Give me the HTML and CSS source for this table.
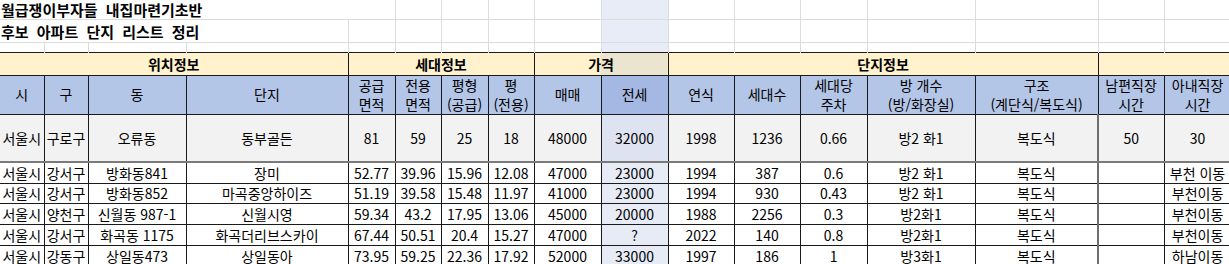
FILE: index.html
```html
<!DOCTYPE html>
<html lang="ko">
<head>
<meta charset="utf-8">
<title>후보 아파트 단지 리스트 정리</title>
<link rel="stylesheet" href="styles.css">
</head>
<body>
<table class="sheet">
  <colgroup>
    <col class="ca"><col class="cb"><col class="cc"><col class="cd">
    <col class="ce"><col class="cf"><col class="cg"><col class="ch">
    <col class="ci"><col class="cj"><col class="ck"><col class="cl">
    <col class="cm"><col class="cn"><col class="co"><col class="cp"><col class="cq">
  </colgroup>
  <tr class="r1">
    <td class="g title" colspan="5">월급쟁이부자들 내집마련기초반</td>
    <td class="g"></td><td class="g"></td><td class="g"></td><td class="g"></td>
    <td class="g sel"></td><td class="g"></td><td class="g"></td><td class="g"></td>
    <td class="g"></td><td class="g"></td><td class="g"></td><td class="g"></td>
  </tr>
  <tr class="r2">
    <td class="g title" colspan="4">후보 아파트 단지 리스트 정리</td>
    <td class="g"></td><td class="g"></td><td class="g"></td><td class="g"></td><td class="g"></td>
    <td class="g sel"></td><td class="g"></td><td class="g"></td><td class="g"></td>
    <td class="g"></td><td class="g"></td><td class="g"></td><td class="g"></td>
  </tr>
  <tr class="r3">
    <td class="g e"></td><td class="g e"></td><td class="g e"></td><td class="g e"></td>
    <td class="g e"></td><td class="g e"></td><td class="g e"></td><td class="g e"></td><td class="g e"></td>
    <td class="g e sel"></td><td class="g e"></td><td class="g e"></td><td class="g e"></td>
    <td class="g e"></td><td class="g e"></td><td class="g e"></td><td class="g e"></td>
  </tr>
  <tr class="h1">
    <td colspan="4">위치정보</td>
    <td colspan="4">세대정보</td>
    <td colspan="2" class="price">가격</td>
    <td colspan="5">단지정보</td>
    <td colspan="2"></td>
  </tr>
  <tr class="h2">
    <td>시</td><td>구</td><td>동</td><td>단지</td>
    <td>공급<br>면적</td><td>전용<br>면적</td><td>평형<br>(공급)</td><td>평<br>(전용)</td>
    <td>매매</td><td class="sel">전세</td><td>연식</td><td>세대수</td>
    <td>세대당<br>주차</td><td>방 개수<br>(방/화장실)</td><td>구조<br>(계단식/복도식)</td>
    <td class="split">남편직장<br>시간</td><td>아내직장<br>시간</td>
  </tr>
  <tr class="d first">
    <td>서울시</td><td>구로구</td><td>오류동</td><td>동부골든</td>
    <td>81</td><td>59</td><td>25</td><td>18</td>
    <td>48000</td><td class="sel">32000</td><td>1998</td><td>1236</td>
    <td>0.66</td><td>방2 화1</td><td>복도식</td><td class="split">50</td><td>30</td>
  </tr>
  <tr class="d">
    <td>서울시</td><td>강서구</td><td>방화동841</td><td>장미</td>
    <td>52.77</td><td>39.96</td><td>15.96</td><td>12.08</td>
    <td>47000</td><td class="sel">23000</td><td>1994</td><td>387</td>
    <td>0.6</td><td>방2 화1</td><td>복도식</td><td class="split"></td><td>부천 이동</td>
  </tr>
  <tr class="d short">
    <td>서울시</td><td>강서구</td><td>방화동852</td><td>마곡중앙하이즈</td>
    <td>51.19</td><td>39.58</td><td>15.48</td><td>11.97</td>
    <td>41000</td><td class="sel">23000</td><td>1994</td><td>930</td>
    <td>0.43</td><td>방2 화1</td><td>복도식</td><td class="split"></td><td>부천이동</td>
  </tr>
  <tr class="d">
    <td>서울시</td><td>양천구</td><td>신월동 987-1</td><td>신월시영</td>
    <td>59.34</td><td>43.2</td><td>17.95</td><td>13.06</td>
    <td>45000</td><td class="sel">20000</td><td>1988</td><td>2256</td>
    <td>0.3</td><td>방2화1</td><td>복도식</td><td class="split"></td><td>부천이동</td>
  </tr>
  <tr class="d">
    <td>서울시</td><td>강서구</td><td>화곡동 1175</td><td>화곡더리브스카이</td>
    <td>67.44</td><td>50.51</td><td>20.4</td><td>15.27</td>
    <td>47000</td><td class="sel">?</td><td>2022</td><td>140</td>
    <td>0.8</td><td>방2화1</td><td>복도식</td><td class="split"></td><td>부천이동</td>
  </tr>
  <tr class="d">
    <td>서울시</td><td>강동구</td><td>상일동473</td><td>상일동아</td>
    <td>73.95</td><td>59.25</td><td>22.36</td><td>17.92</td>
    <td>52000</td><td class="sel">33000</td><td>1997</td><td>186</td>
    <td>1</td><td>방3화1</td><td>복도식</td><td class="split"></td><td>하남이동</td>
  </tr>
</table>
</body>
</html>
```
FILE: styles.css
```css
html, body {
  margin: 0;
  padding: 0;
  background: #ffffff;
  overflow: hidden;
}

body {
  font-family: "Noto Sans CJK KR", "Noto Sans", sans-serif;
  font-size: 14px;
  color: #000000;
}

.sheet {
  border-collapse: collapse;
  table-layout: fixed;
  width: 1231px;
}

.ca { width: 44px; }
.cb { width: 44px; }
.cc { width: 98px; }
.cd { width: 162px; }
.ce { width: 47px; }
.cf { width: 46px; }
.cg { width: 47px; }
.ch { width: 46px; }
.ci { width: 67px; }
.cj { width: 67px; }
.ck { width: 66px; }
.cl { width: 66px; }
.cm { width: 67px; }
.cn { width: 108px; }
.co { width: 123px; }
.cp { width: 66px; }
.cq { width: 67px; }

.sheet td {
  padding: 0;
  text-align: center;
  vertical-align: middle;
  white-space: nowrap;
  overflow: hidden;
  line-height: 18px;
  border: 1px solid #1a1a1a;
}

.sheet td:first-child {
  border-left: none;
}

/* plain grid area above the table */
.sheet td.g {
  border-top: none;
  border-left: none;
  border-right: 1px solid #dcdcdc;
  border-bottom: 1px solid #dcdcdc;
}

.sheet td.g.e {
  border-bottom: none;
}

.sheet td.title {
  text-align: left;
  font-weight: 700;
  font-size: 15px;
  word-spacing: 4px;
  padding-left: 1px;
  border-right: 1px solid #dcdcdc;
}

.r1 { height: 19px; }
.r1 td { height: 18px; vertical-align: bottom; line-height: 18px; }
.r2 { height: 23px; }
.r2 td { height: 22px; vertical-align: bottom; line-height: 20px; }
.r3 { height: 9px; }
.r3 td { height: 9px; }

.sel {
  background: #e7ecf7;
}

/* group header row */
.h1 td {
  height: 22px;
  background: #fff2cc;
  font-weight: 700;
  line-height: 20px;
}

.h1 td.price {
  background: linear-gradient(to right, #fff2cc 0, #fff2cc 66px, #ebe4cf 66px, #ebe4cf 100%);
}

/* column header row */
.h2 td {
  height: 37px;
  background: #b4c6e7;
  line-height: 19px;
}

.h2 td.sel {
  background: #a5b8e3;
}

/* data rows */
.d td {
  height: 20px;
  line-height: 18px;
}

.d.short td {
  height: 19px;
}

.d td.sel {
  background: #e6ebf6;
}

.d td.split {
  border-left: 2px solid #6e6e6e;
}

.d.first td {
  height: 46px;
  background: #f2f2f2;
  border-bottom: 2px solid #7a7a7a;
}

.d.first td.sel {
  background: #dde3f0;
}
```
